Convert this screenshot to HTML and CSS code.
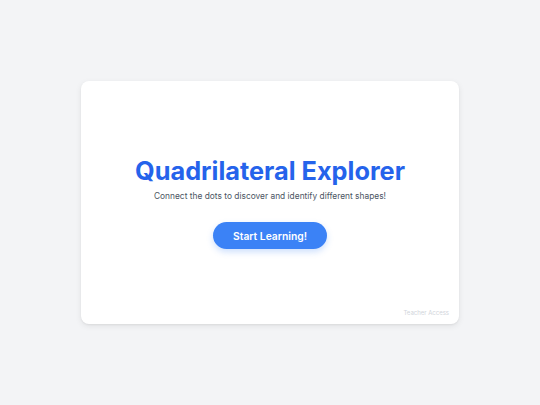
FILE: index.html
```html
<!DOCTYPE html>
<html>
<head>
<meta charset="utf-8">
<link rel="stylesheet" href="styles.css">
</head>
<body>
<div class="card">
  <h1 class="title">Quadrilateral Explorer</h1>
  <p class="subtitle">Connect the dots to discover and identify different shapes!</p>
  <button class="start">Start Learning!</button>
  <span class="teacher">Teacher Access</span>
</div>
</body>
</html>
```

FILE: styles.css
```css
html, body {
  margin: 0;
  padding: 0;
  height: 100%;
}
body {
  background: #f3f4f6;
  font-family: Inter, "Noto Sans", sans-serif;
  display: flex;
  align-items: center;
  justify-content: center;
}
.card {
  position: relative;
  width: 378px;
  height: 243px;
  background: #ffffff;
  border-radius: 8px;
  box-shadow: 0 2px 6px rgba(0,0,0,0.08), 0 1px 2px rgba(0,0,0,0.05);
  display: flex;
  flex-direction: column;
  align-items: center;
  justify-content: center;
}
.title {
  margin: 0;
  font-size: 25.3px;
  font-weight: 700;
  color: #2563eb;
  line-height: 30px;
}
.subtitle {
  margin: 5px 0 0;
  font-size: 8.4px;
  line-height: 10px;
  color: #4b5563;
}
.start {
  margin-top: 21px;
  width: 114px;
  height: 27px;
  border: none;
  border-radius: 14px;
  background: #3b82f6;
  color: #ffffff;
  font-family: Inter, "Noto Sans", sans-serif;
  font-size: 10.3px;
  font-weight: 600;
  box-shadow: 0 3px 6px rgba(59,130,246,0.25);
}
.teacher {
  position: absolute;
  right: 10px;
  bottom: 8px;
  font-size: 6px;
  color: #d1d5db;
}
```
